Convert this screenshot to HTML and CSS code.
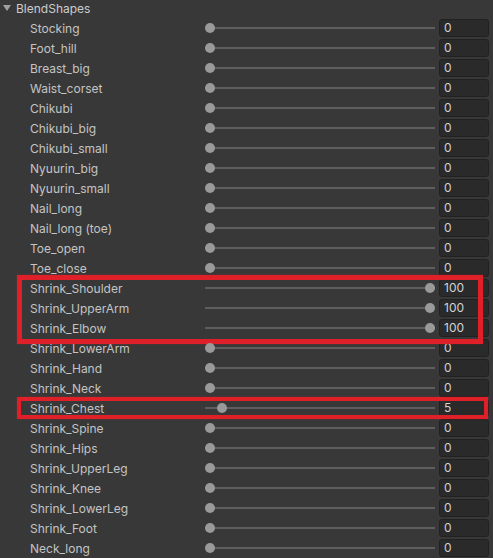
FILE: index.html
```html
<!DOCTYPE html>
<html>
<head>
<meta charset="utf-8">
<link rel="stylesheet" href="styles.css">
</head>
<body>
<div class="panel">
  <div class="header"><span class="tri"></span><span class="title">BlendShapes</span></div>
  <div class="row"><span class="label">Stocking</span><div class="slider"><span class="knob" style="left:0%"></span></div><div class="field">0</div></div>
  <div class="row"><span class="label">Foot_hill</span><div class="slider"><span class="knob" style="left:0%"></span></div><div class="field">0</div></div>
  <div class="row"><span class="label">Breast_big</span><div class="slider"><span class="knob" style="left:0%"></span></div><div class="field">0</div></div>
  <div class="row"><span class="label">Waist_corset</span><div class="slider"><span class="knob" style="left:0%"></span></div><div class="field">0</div></div>
  <div class="row"><span class="label">Chikubi</span><div class="slider"><span class="knob" style="left:0%"></span></div><div class="field">0</div></div>
  <div class="row"><span class="label">Chikubi_big</span><div class="slider"><span class="knob" style="left:0%"></span></div><div class="field">0</div></div>
  <div class="row"><span class="label">Chikubi_small</span><div class="slider"><span class="knob" style="left:0%"></span></div><div class="field">0</div></div>
  <div class="row"><span class="label">Nyuurin_big</span><div class="slider"><span class="knob" style="left:0%"></span></div><div class="field">0</div></div>
  <div class="row"><span class="label">Nyuurin_small</span><div class="slider"><span class="knob" style="left:0%"></span></div><div class="field">0</div></div>
  <div class="row"><span class="label">Nail_long</span><div class="slider"><span class="knob" style="left:0%"></span></div><div class="field">0</div></div>
  <div class="row"><span class="label">Nail_long (toe)</span><div class="slider"><span class="knob" style="left:0%"></span></div><div class="field">0</div></div>
  <div class="row"><span class="label">Toe_open</span><div class="slider"><span class="knob" style="left:0%"></span></div><div class="field">0</div></div>
  <div class="row"><span class="label">Toe_close</span><div class="slider"><span class="knob" style="left:0%"></span></div><div class="field">0</div></div>
  <div class="group mark-a">
    <div class="row"><span class="label">Shrink_Shoulder</span><div class="slider"><span class="knob" style="left:100%"></span></div><div class="field">100</div></div>
    <div class="row"><span class="label">Shrink_UpperArm</span><div class="slider"><span class="knob" style="left:100%"></span></div><div class="field">100</div></div>
    <div class="row"><span class="label">Shrink_Elbow</span><div class="slider"><span class="knob" style="left:100%"></span></div><div class="field">100</div></div>
  </div>
  <div class="row"><span class="label">Shrink_LowerArm</span><div class="slider"><span class="knob" style="left:0%"></span></div><div class="field">0</div></div>
  <div class="row"><span class="label">Shrink_Hand</span><div class="slider"><span class="knob" style="left:0%"></span></div><div class="field">0</div></div>
  <div class="row"><span class="label">Shrink_Neck</span><div class="slider"><span class="knob" style="left:0%"></span></div><div class="field">0</div></div>
  <div class="group mark-b">
    <div class="row"><span class="label">Shrink_Chest</span><div class="slider"><span class="knob" style="left:5%"></span></div><div class="field">5</div></div>
  </div>
  <div class="row"><span class="label">Shrink_Spine</span><div class="slider"><span class="knob" style="left:0%"></span></div><div class="field">0</div></div>
  <div class="row"><span class="label">Shrink_Hips</span><div class="slider"><span class="knob" style="left:0%"></span></div><div class="field">0</div></div>
  <div class="row"><span class="label">Shrink_UpperLeg</span><div class="slider"><span class="knob" style="left:0%"></span></div><div class="field">0</div></div>
  <div class="row"><span class="label">Shrink_Knee</span><div class="slider"><span class="knob" style="left:0%"></span></div><div class="field">0</div></div>
  <div class="row"><span class="label">Shrink_LowerLeg</span><div class="slider"><span class="knob" style="left:0%"></span></div><div class="field">0</div></div>
  <div class="row"><span class="label">Shrink_Foot</span><div class="slider"><span class="knob" style="left:0%"></span></div><div class="field">0</div></div>
  <div class="row"><span class="label">Neck_long</span><div class="slider"><span class="knob" style="left:0%"></span></div><div class="field">0</div></div>
</div>
</body>
</html>
```

FILE: styles.css
```css
html, body {
  margin: 0;
  padding: 0;
  background: #383838;
  overflow: hidden;
}
.panel {
  margin-top: -2px;
  font-family: Inter, "Noto Sans", sans-serif;
  font-size: 12px;
  color: #c4c4c4;
}
.header {
  height: 20px;
  display: flex;
  align-items: center;
  padding-left: 3px;
}
.tri {
  width: 0;
  height: 0;
  border-left: 4px solid transparent;
  border-right: 4px solid transparent;
  border-top: 6px solid #a0a0a0;
  margin-right: 5px;
}
.title {
  color: #cccccc;
}
.row {
  height: 20px;
  display: flex;
  align-items: center;
  padding-left: 30px;
}
.label {
  width: 175px;
  flex: none;
  white-space: nowrap;
}
.slider {
  position: relative;
  width: 230px;
  height: 2px;
  flex: none;
  background: #5e5e5e;
}
.knob {
  position: absolute;
  top: 50%;
  width: 10px;
  height: 10px;
  border-radius: 50%;
  background: #9a9a9a;
  transform: translate(0, -50%);
}
.knob[style*="left:100%"] { transform: translate(-100%, -50%); }
.field {
  margin-left: 4px;
  width: 50px;
  height: 18px;
  box-sizing: border-box;
  background: #2a2a2a;
  border: 1px solid #212121;
  border-radius: 3px;
  padding-left: 4px;
  line-height: 16px;
  color: #d2d2d2;
  flex: none;
}
.group {
  position: relative;
}
.group::after {
  content: "";
  position: absolute;
  border: 4px solid #df2029;
  box-shadow: 0 0 1px rgba(223, 32, 41, 0.6);
  pointer-events: none;
}
.mark-a::after {
  left: 17px;
  right: 10px;
  top: -3px;
  bottom: -6px;
  border-width: 5px;
}
.mark-b::after {
  left: 17px;
  right: 5px;
  top: -1px;
  bottom: -1px;
}
```
